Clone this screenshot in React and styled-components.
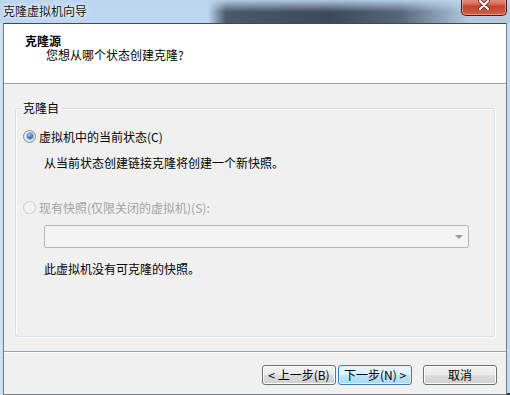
import React from 'react'
import styled, { createGlobalStyle } from 'styled-components'

const GlobalStyle = createGlobalStyle`
  html, body {
    margin: 0;
    padding: 0;
    background: #c4daf0;
  }
  body {
    font-family: "Noto Sans CJK SC", "Liberation Sans", sans-serif;
    font-size: 12px;
    color: #000;
  }
  * {
    box-sizing: border-box;
  }
`

const Window = styled.div`
  width: 510px;
  height: 395px;
  display: flex;
  flex-direction: column;
  overflow: hidden;
  background:
    linear-gradient(to right, #cfe0f2 200px, #5a6673 214px, #2f3944 250px) bottom / 100% 2px no-repeat,
    linear-gradient(to right, #d6e6f5 0, #c4daf0 3px);
`

const TitleBar = styled.div`
  height: 23px;
  flex: none;
  display: flex;
  align-items: flex-start;
  padding-left: 3px;
  background:
    linear-gradient(to bottom, rgba(189, 214, 239, 0.9) 0, rgba(189, 214, 239, 0) 12px),
    linear-gradient(to right, #bdd7f0 0, #bdd7f0 208px, #4c5969 226px, #3d4958 330px, #56667a 400px, #93a7bc 445px, #b8cbde 470px);
`

const Title = styled.span`
  line-height: 22px;
  font-size: 12px;
  color: #111;
  text-shadow: 0 0 5px rgba(255, 255, 255, 0.95), 0 0 2px rgba(255, 255, 255, 0.9);
`

const CloseButton = styled.div`
  width: 46px;
  height: 20px;
  margin: -4px 3px 0 auto;
  display: flex;
  align-items: center;
  justify-content: center;
  padding-bottom: 2px;
  border: 1px solid #4a1a14;
  border-top: none;
  border-radius: 0 0 5px 5px;
  background: linear-gradient(to bottom, #e9a697 0, #d7705b 40%, #c4432c 55%, #d2624c 100%);
  box-shadow: inset 0 0 0 1px rgba(255, 220, 210, 0.45);
`

const Client = styled.div`
  flex: 1;
  margin: 0 3px;
  display: flex;
  flex-direction: column;
  border: 1px solid #707e8d;
  border-top-color: #3f4a56;
`

const Header = styled.div`
  height: 60px;
  flex: none;
  background: #fff;
  border-bottom: 1px solid #a0a0a0;
  padding: 10px 0 0 21px;
`

const HeaderTitle = styled.div`
  font-weight: bold;
  line-height: 14px;
`

const HeaderSubtitle = styled.div`
  line-height: 14px;
  padding-left: 21px;
`

const Body = styled.div`
  flex: 1;
  display: flex;
  flex-direction: column;
  background: #f0f0f0;
  padding: 16px 11px 14px;
`

const GroupBox = styled.fieldset`
  flex: 1;
  margin: 0;
  min-width: 0;
  padding: 12px 7px 0;
  border: 1px solid #d5dfe5;
  border-radius: 3px;
  box-shadow: inset 1px 1px 0 #fff, 1px 1px 0 #fff;
`

const Legend = styled.legend`
  padding: 0 2px;
  margin-left: -2px;
  line-height: 16px;
  font-size: 12px;
`

const RadioRow = styled.label`
  display: flex;
  align-items: center;
  gap: 3px;
  height: 16px;
  margin-top: ${p => p.$gap || 0}px;
  color: ${p => (p.$disabled ? '#a3a3a3' : '#000')};
`

const RadioMark = styled.span`
  width: 13px;
  height: 13px;
  flex: none;
  border-radius: 50%;
  display: flex;
  align-items: center;
  justify-content: center;
  border: 1px solid ${p => (p.$disabled ? '#cdcdcd' : '#8b8b8b')};
  background: ${p =>
    p.$disabled
      ? '#f3f3f3'
      : 'radial-gradient(circle at 50% 40%, #ffffff 0, #f0f0f0 45%, #d6d6d6 100%)'};

  &::after {
    content: '';
    display: ${p => (p.$checked ? 'block' : 'none')};
    width: 6px;
    height: 6px;
    border-radius: 50%;
    background: radial-gradient(circle at 40% 35%, #9fd0f7 0, #3b83c9 45%, #16508f 100%);
    box-shadow: 0 0 0 1px rgba(40, 90, 150, 0.35);
  }
`

const Indented = styled.div`
  padding-left: 21px;
  margin-top: ${p => p.$gap || 0}px;
  line-height: 16px;
`

const ComboBox = styled.div`
  width: 425px;
  height: 23px;
  display: flex;
  align-items: center;
  justify-content: flex-end;
  padding-right: 5px;
  border: 1px solid #b3b7ba;
  border-radius: 2px;
  background: #f4f4f4;
`

const ComboArrow = styled.span`
  width: 0;
  height: 0;
  border-left: 4px solid transparent;
  border-right: 4px solid transparent;
  border-top: 4px solid #9a9a9a;
`

const Footer = styled.div`
  height: 43px;
  flex: none;
  display: flex;
  justify-content: flex-end;
  align-items: flex-start;
  gap: 2px;
  padding: 13px 9px 0 0;
  background: #f0f0f0;
  border-top: 1px solid #a0a0a0;
  box-shadow: inset 0 1px 0 #fff;
`

const Button = styled.button`
  width: 74px;
  height: 20px;
  padding: 0;
  margin-left: ${p => p.$space || 0}px;
  font-family: "Noto Sans CJK SC", "Liberation Sans", sans-serif;
  font-size: 12px;
  line-height: 16px;
  color: #000;
  border-radius: 3px;
  border: 1px solid ${p => (p.$primary ? '#3c7fb1' : '#707070')};
  background: ${p =>
    p.$primary
      ? 'linear-gradient(to bottom, #eaf6fd 0, #d9f0fc 50%, #bee6fd 50%, #a7d9f5 100%)'
      : 'linear-gradient(to bottom, #f2f2f2 0, #ebebeb 50%, #dddddd 50%, #cfcfcf 100%)'};
  box-shadow: inset 0 0 0 1px ${p => (p.$primary ? '#dff2fc' : '#fcfcfc')};
`

export default function App() {
  return (
    <Window>
      <GlobalStyle />
      <TitleBar>
        <Title>克隆虚拟机向导</Title>
        <CloseButton>
          <svg width="12" height="10" viewBox="0 0 12 10">
            <path d="M2 1 L10 9 M10 1 L2 9" stroke="#5a1c14" strokeWidth="3.6" strokeLinecap="round" />
            <path d="M2 1 L10 9 M10 1 L2 9" stroke="#fff" strokeWidth="2.2" strokeLinecap="round" />
          </svg>
        </CloseButton>
      </TitleBar>
      <Client>
        <Header>
          <HeaderTitle>克隆源</HeaderTitle>
          <HeaderSubtitle>您想从哪个状态创建克隆?</HeaderSubtitle>
        </Header>
        <Body>
          <GroupBox>
            <Legend>克隆自</Legend>
            <RadioRow>
              <RadioMark $checked />
              虚拟机中的当前状态(C)
            </RadioRow>
            <Indented $gap={11}>从当前状态创建链接克隆将创建一个新快照。</Indented>
            <RadioRow $gap={28} $disabled>
              <RadioMark $disabled />
              现有快照(仅限关闭的虚拟机)(S):
            </RadioRow>
            <Indented $gap={10}>
              <ComboBox>
                <ComboArrow />
              </ComboBox>
            </Indented>
            <Indented $gap={13}>此虚拟机没有可克隆的快照。</Indented>
          </GroupBox>
        </Body>
        <Footer>
          <Button>&lt; 上一步(B)</Button>
          <Button $primary>下一步(N) &gt;</Button>
          <Button $space={9}>取消</Button>
        </Footer>
      </Client>
    </Window>
  )
}
